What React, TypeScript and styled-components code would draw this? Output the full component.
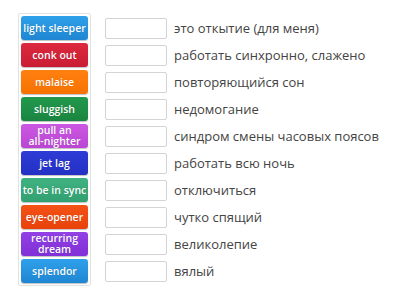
import React from 'react'
import styled, { createGlobalStyle } from 'styled-components'

const GlobalStyle = createGlobalStyle`
  html, body {
    margin: 0;
    padding: 0;
    background: #fff;
  }
  body {
    font-family: 'Open Sans', 'Liberation Sans', sans-serif;
  }
`

// 전체 페이지: 왼쪽 단어 패널 + 오른쪽 정답 칸
const Page = styled.div`
  width: 400px;
  height: 300px;
  display: flex;
  align-items: flex-start;
  padding: 13px 0 0 18px;
  box-sizing: border-box;
  gap: 14px;
`

const TilePanel = styled.div`
  display: flex;
  flex-direction: column;
  gap: 3px;
  padding: 2px;
  border: 1px solid #e2e2e2;
  border-radius: 2px;
`

const Tile = styled.div<{ $color: string; $dark: string }>`
  width: 67px;
  height: 24px;
  box-sizing: border-box;
  display: flex;
  align-items: center;
  justify-content: center;
  text-align: center;
  border-radius: 3px;
  background: linear-gradient(${(p) => p.$color}, ${(p) => p.$dark});
  box-shadow: 0 1px 1px rgba(0, 0, 0, 0.25);
  color: #fff;
  font-weight: 600;
  font-size: 10.5px;
  line-height: 11px;
  text-shadow: 0 0 1px rgba(0, 0, 0, 0.2);
  white-space: pre-line;
`

const Answers = styled.div`
  display: flex;
  flex-direction: column;
  gap: 3px;
  padding-top: 3px;
`

const Row = styled.div`
  height: 24px;
  display: flex;
  align-items: center;
  gap: 7px;
`

const Slot = styled.div`
  width: 62px;
  height: 21px;
  box-sizing: border-box;
  border: 1px solid #d4d4d4;
  border-radius: 2px;
  background: #fff;
`

const Definition = styled.span`
  font-size: 13px;
  color: #444;
  white-space: nowrap;
`

const tiles = [
  { label: 'light sleeper', color: '#2fa0ea', dark: '#1f86d2' },
  { label: 'conk out', color: '#dc2a40', dark: '#c91c32' },
  { label: 'malaise', color: '#ff8110', dark: '#f77200' },
  { label: 'sluggish', color: '#22994d', dark: '#1a8540' },
  { label: 'pull an\nall-nighter', color: '#cb58e2', dark: '#bb45d4' },
  { label: 'jet lag', color: '#2e3cd6', dark: '#2430c4' },
  { label: 'to be in sync', color: '#40b282', dark: '#32a070' },
  { label: 'eye-opener', color: '#f55216', dark: '#e8420a' },
  { label: 'recurring\ndream', color: '#9340e6', dark: '#8030d6' },
  { label: 'splendor', color: '#2fa0ea', dark: '#1f86d2' },
]

const definitions = [
  'это откытие (для меня)',
  'работать синхронно, слажено',
  'повторяющийся сон',
  'недомогание',
  'синдром смены часовых поясов',
  'работать всю ночь',
  'отключиться',
  'чутко спящий',
  'великолепие',
  'вялый',
]

export default function App() {
  return (
    <>
      <GlobalStyle />
      <Page>
        <TilePanel>
          {tiles.map((t) => (
            <Tile key={t.label} $color={t.color} $dark={t.dark}>
              {t.label}
            </Tile>
          ))}
        </TilePanel>
        <Answers>
          {definitions.map((d) => (
            <Row key={d}>
              <Slot />
              <Definition>{d}</Definition>
            </Row>
          ))}
        </Answers>
      </Page>
    </>
  )
}
